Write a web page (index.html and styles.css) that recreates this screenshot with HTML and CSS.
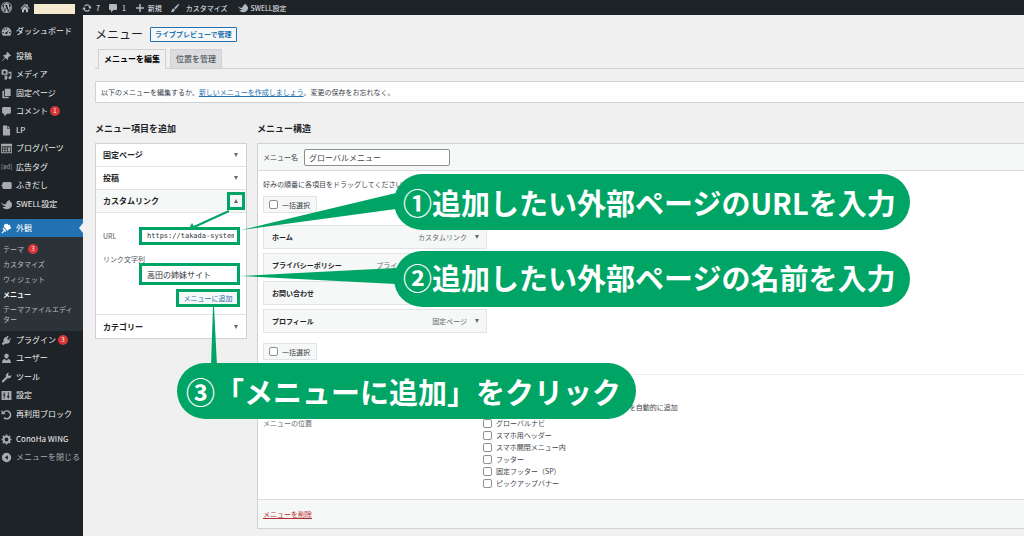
FILE: index.html
```
<!DOCTYPE html>
<html lang="ja">
<head>
<meta charset="utf-8">
<title>メニュー</title>
<link rel="stylesheet" href="styles.css">
</head>
<body>
<svg class="defs" aria-hidden="true">
  <symbol id="i-wp" viewBox="0 0 20 20"><path fill-rule="evenodd" d="M10 0a10 10 0 1 0 0 20 10 10 0 0 0 0-20zm0 1.200a8.800 8.800 0 1 1 0 17.600 8.800 8.800 0 0 1 0-17.600z"/><path d="M2.900 6.800l4 11A8.100 8.100 0 0 1 2.900 6.800zM3.900 5A8.100 8.100 0 0 1 15.300 3.900c-1.500.5-1.500 2.200-.5 3.600 1 1.800.8 3.200.3 4.700l-.9 3L11 6.300h1.200v-.8H6.800v.8h1.100l1.300 3.500-1.900 5.500L4.500 6.300h1.200V5zM10.200 11l2.500 6.800a8 8 0 0 1-4.800.1zM17 6.100a8.100 8.100 0 0 1-3 11l2.500-7.200c.5-1.400.6-2.700.5-3.800z"/></symbol>
  <symbol id="i-home" viewBox="0 0 20 20"><path d="M10 1.500l2.800 2.800V2.500h2.700V7L19 10.500l-1.300 1.300L10 4.200l-7.700 7.600L1 10.500zM10 6l6 6v6.500h-4v-5H8v5H4V12z"/></symbol>
  <symbol id="i-update" viewBox="0 0 20 20"><path d="M10 2.500c3.300 0 6.100 2.100 7.100 5h2.400l-3.600 5-3.600-5h2.200A4.900 4.900 0 0 0 6.100 7L4 5.500a7.500 7.500 0 0 1 6-3zM4.100 7.500l3.600 5H5.500a4.900 4.900 0 0 0 8.400.5l2.100 1.500a7.500 7.500 0 0 1-13.100-2H.5z"/></symbol>
  <symbol id="i-comment" viewBox="0 0 20 20"><path d="M4 2h12a2 2 0 0 1 2 2v8a2 2 0 0 1-2 2h-5l-5 5v-5H4a2 2 0 0 1-2-2V4a2 2 0 0 1 2-2z"/></symbol>
  <symbol id="i-plus" viewBox="0 0 20 20"><path d="M8.500 2h3v6.500H18v3h-6.500V18h-3v-6.500H2v-3h6.500z"/></symbol>
  <symbol id="i-brush" viewBox="0 0 20 20"><path d="M18.500 1.500c1 1-6 10-7.500 11L8.500 10C10 8 17.500.5 18.500 1.500zM7.500 11l2.300 2.400c.2 3.600-4.800 5.600-8.300 4.600 2-.8 1.700-2.500 2.500-4.500s2-2.600 3.500-2.500z"/></symbol>
  <symbol id="i-swell" viewBox="0 0 20 20"><path d="M0 6c3 3.500 6.500 4.500 9 2.500 1-3.500 3.500-6 7.500-6.500l-.5 2.500c2.500.5 4 2.500 4 5.500 0 5-4 8.500-9.500 8.500-4 0-7-2-8-4.500 2.500.8 5 .4 6.500-1C4.500 12.500 1 10 0 6z"/></symbol>
  <symbol id="i-dash" viewBox="0 0 20 20"><path fill-rule="evenodd" d="M3.500 17.500A9 9 0 1 1 16.500 17.500zM9 4h2v2.500H9zM4.500 6l1.300-1.300 1.700 1.800L6.200 7.800zM2.600 11h2.600v2H2.600zM14.800 11h2.600v2h-2.600zM15.500 6.500L11.600 12a2 2 0 1 1-1.200-1z"/></symbol>
  <symbol id="i-pin" viewBox="0 0 20 20"><path d="M11.500 1.500l7 7-1.200 1.200-1.500-.4-3 3c.4 1.800 0 3.200-1 4.200l-3.600-3.600L2 18.500l-.5-.5 5.600-6.200-3.600-3.600c1-1 2.400-1.400 4.200-1l3-3-.4-1.500z"/></symbol>
  <symbol id="i-media" viewBox="0 0 20 20"><path fill-rule="evenodd" d="M1 1.500h3l1-1h3l1 1h3v9H1zm5.500 2a2.500 2.500 0 1 0 0 5 2.500 2.500 0 0 0 0-5z"/><path d="M13.500 5H19v11a2.700 2.700 0 1 1-2-2.600V8h-3.500zM6 12h5.500v5a2.600 2.600 0 1 1-2-2.500V14H6z"/></symbol>
  <symbol id="i-pages" viewBox="0 0 20 20"><path d="M7 1.500h10.500v13H7zM2.500 5h3v11H14v2.500H2.500z"/></symbol>
  <symbol id="i-page" viewBox="0 0 20 20"><path d="M3.500 1H11v6h5.500v12h-13zM12 1l4.500 5H12z"/></symbol>
  <symbol id="i-parts" viewBox="0 0 20 20"><path fill-rule="evenodd" d="M0 1.500h20v17H0zM1.500 6v11h17V6zM3 7.500h3.500v3H3zM8 7.500h3.500v3H8zM13 7.500h4v8h-4zM3 12h3.500v3.500H3zM8 12h3.500v3.500H8z"/></symbol>
  <symbol id="i-balloon" viewBox="0 0 20 20"><rect x="2.500" y="3.500" width="17" height="13" rx="3"/><path d="M0 10l4-2.500v5z"/></symbol>
  <symbol id="i-look" viewBox="0 0 20 20"><path d="M7 1l2 1.500L11.500 1l2 2.500 3.500-.5-1 3 3 2.500-7.500 5.500L5 6.500zM4.500 8l5.500 6.500-2 1.500-1.500-1-4 4-1.500-1.500 4-4.500L3 10z"/></symbol>
  <symbol id="i-plugin" viewBox="0 0 20 20"><path d="M12 1.500L14 3l-3 4 2.500 2 3.500-3.500L18.500 7 15 10.500l1.500 1.500c-2 3.500-5.500 5-8.500 3.500L4 18.500 1.500 16 5 12c-1.500-3 0-6.500 3-8.500l1 1z"/></symbol>
  <symbol id="i-user" viewBox="0 0 20 20"><path d="M10 1a4.300 4.300 0 0 1 4 4.500C14 8 12.300 10 10 10S6 8 6 5.500A4.300 4.300 0 0 1 10 1zM2 18c0-4.500 2-7 5-7l3 2.500 3-2.500c3 0 5 2.500 5 7z"/></symbol>
  <symbol id="i-tool" viewBox="0 0 20 20"><path d="M16.700 6.800l2-1.500c.8 4.200-2.700 7.200-6.700 6L4.500 18.500c-1.800 1.500-4-.8-2.700-2.500L9 8.500C8 4.500 11 1 15 1.500l-2.200 2.300.7 2.800z"/></symbol>
  <symbol id="i-set" viewBox="0 0 20 20"><path fill-rule="evenodd" d="M1 2h18v16H1zM5 4v4H3.500v2H5v6h1.500v-6H8V8H6.500V4zM12.500 4v7H11v2h1.500v3H14v-3h1.500v-2H14V4z"/></symbol>
  <symbol id="i-reuse" viewBox="0 0 20 20"><path d="M1 2v7.500h7.500L6 7a5.500 5.500 0 1 1 .5 7.500L4.300 16.700A8.500 8.500 0 1 0 4 5z"/></symbol>
  <symbol id="i-gear" viewBox="0 0 20 20"><path fill-rule="evenodd" d="M8.500 1h3l.5 2.500 1.500.6 2-1.500 2.100 2.100-1.500 2 .6 1.500 2.300.3v3l-2.300.5-.6 1.500 1.500 2-2.100 2.100-2-1.500-1.500.6-.5 2.300h-3L8 16.700l-1.500-.6-2 1.500-2.100-2.100 1.500-2L3.300 12 1 11.500v-3L3.300 8l.6-1.500-1.500-2 2.100-2.100 2 1.500L8 3.500zM10 6.500a3.500 3.500 0 1 0 0 7 3.500 3.500 0 0 0 0-7z"/></symbol>
  <symbol id="i-collapse" viewBox="0 0 20 20"><path fill-rule="evenodd" d="M10 1.500a8.500 8.500 0 1 0 0 17 8.500 8.500 0 0 0 0-17zM12.500 6v8L7 10z"/></symbol>
</svg>

<header class="adminbar">
  <a href="#" class="bar-logo" aria-label="WordPress"><svg class="bar-icon"><use href="#i-wp"/></svg></a>
  <a href="#" class="bar-site" aria-label="サイト"><svg class="bar-icon"><use href="#i-home"/></svg><span class="site-mask"></span></a>
  <a href="#" class="bar-count"><svg class="bar-icon"><use href="#i-update"/></svg>7</a>
  <a href="#" class="bar-count"><svg class="bar-icon"><use href="#i-comment"/></svg>1</a>
  <a href="#" class="bar-new"><svg class="bar-icon"><use href="#i-plus"/></svg>新規</a>
  <a href="#" class="bar-custom"><svg class="bar-icon"><use href="#i-brush"/></svg>カスタマイズ</a>
  <a href="#" class="bar-swell"><svg class="bar-icon"><use href="#i-swell"/></svg>SWELL設定</a>
</header>

<div class="layout">
  <nav class="sidebar">
    <ul class="nav-group">
      <li><a href="#"><svg class="icon"><use href="#i-dash"/></svg>ダッシュボード</a></li>
    </ul>
    <ul class="nav-group">
      <li><a href="#"><svg class="icon"><use href="#i-pin"/></svg>投稿</a></li>
      <li><a href="#"><svg class="icon"><use href="#i-media"/></svg>メディア</a></li>
      <li><a href="#"><svg class="icon"><use href="#i-pages"/></svg>固定ページ</a></li>
      <li><a href="#"><svg class="icon"><use href="#i-comment"/></svg>コメント<span class="badge">1</span></a></li>
      <li><a href="#"><svg class="icon"><use href="#i-page"/></svg>LP</a></li>
      <li><a href="#"><svg class="icon"><use href="#i-parts"/></svg>ブログパーツ</a></li>
      <li><a href="#"><span class="icon icon-text">[ad]</span>広告タグ</a></li>
      <li><a href="#"><svg class="icon"><use href="#i-balloon"/></svg>ふきだし</a></li>
      <li><a href="#"><svg class="icon"><use href="#i-swell"/></svg>SWELL設定</a></li>
    </ul>
    <ul class="nav-group group-current">
      <li class="current"><a href="#"><svg class="icon"><use href="#i-look"/></svg>外観</a></li>
    </ul>
    <ul class="subnav">
      <li><a href="#">テーマ<span class="badge">3</span></a></li>
      <li><a href="#">カスタマイズ</a></li>
      <li><a href="#">ウィジェット</a></li>
      <li><a href="#" class="active">メニュー</a></li>
      <li class="two-line"><a href="#">テーマファイルエディター</a></li>
    </ul>
    <ul class="nav-group after-sub">
      <li><a href="#"><svg class="icon"><use href="#i-plugin"/></svg>プラグイン<span class="badge">3</span></a></li>
      <li><a href="#"><svg class="icon"><use href="#i-user"/></svg>ユーザー</a></li>
      <li><a href="#"><svg class="icon"><use href="#i-tool"/></svg>ツール</a></li>
      <li><a href="#"><svg class="icon"><use href="#i-set"/></svg>設定</a></li>
      <li><a href="#"><svg class="icon"><use href="#i-reuse"/></svg>再利用ブロック</a></li>
    </ul>
    <ul class="nav-group">
      <li><a href="#"><svg class="icon"><use href="#i-gear"/></svg>ConoHa WING</a></li>
      <li><a href="#" class="collapse"><svg class="icon"><use href="#i-collapse"/></svg>メニューを閉じる</a></li>
    </ul>
  </nav>

  <main class="content">
    <div class="title-row">
      <h1>メニュー</h1>
      <button type="button" class="preview">ライブプレビューで管理</button>
    </div>
    <div class="tabs">
      <a href="#" class="tab tab-active">メニューを編集</a>
      <a href="#" class="tab">位置を管理</a>
    </div>
    <p class="notice">以下のメニューを編集するか、<a href="#">新しいメニューを作成しましょう</a>。変更の保存をお忘れなく。</p>

    <div class="columns">
      <section class="add-items">
        <h2>メニュー項目を追加</h2>
        <div class="accordion">
          <h3>固定ページ<button type="button" class="toggle" aria-label="固定ページを開く"></button></h3>
          <h3>投稿<button type="button" class="toggle" aria-label="投稿を開く"></button></h3>
          <h3 class="open">カスタムリンク<button type="button" class="toggle toggle-up marked" aria-label="カスタムリンクを閉じる"></button></h3>
          <form class="link-form">
            <div class="field">
              <label for="url">URL</label>
              <input id="url" class="url-input marked" type="text" value="https://takada-system.com">
            </div>
            <div class="field field-name">
              <label for="name">リンク文字列</label>
              <input id="name" class="name-input marked" type="text" value="高田の姉妹サイト">
            </div>
            <button type="button" class="add-button marked">メニューに追加</button>
          </form>
          <h3>カテゴリー<button type="button" class="toggle" aria-label="カテゴリーを開く"></button></h3>
        </div>
      </section>

      <section class="structure">
        <h2>メニュー構造</h2>
        <div class="panel">
          <div class="panel-head">
            <label for="menu-name">メニュー名</label>
            <input id="menu-name" type="text" value="グローバルメニュー">
          </div>
          <div class="panel-body">
            <p>好みの順番に各項目をドラッグしてください</p>
            <label class="bulk"><input type="checkbox">一括選択</label>
            <ul class="items">
              <li><b>ホーム</b><span>カスタムリンク</span><button type="button" class="toggle" aria-label="ホームを編集"></button></li>
              <li><b>プライバシーポリシー</b><span>プライバシーポリシーページ</span><button type="button" class="toggle" aria-label="プライバシーポリシーを編集"></button></li>
              <li><b>お問い合わせ</b><button type="button" class="toggle" aria-label="お問い合わせを編集"></button></li>
              <li><b>プロフィール</b><span>固定ページ</span><button type="button" class="toggle" aria-label="プロフィールを編集"></button></li>
            </ul>
            <label class="bulk"><input type="checkbox">一括選択</label>
          </div>
          <div class="settings">
            <div class="setting">
              <div class="choices"><label><input type="checkbox">このメニューに新しいトップレベルページを自動的に追加</label></div>
            </div>
            <div class="setting">
              <span>メニューの位置</span>
              <div class="choices">
                <label><input type="checkbox">グローバルナビ</label>
                <label><input type="checkbox">スマホ用ヘッダー</label>
                <label><input type="checkbox">スマホ開閉メニュー内</label>
                <label><input type="checkbox">フッター</label>
                <label><input type="checkbox">固定フッター（SP）</label>
                <label><input type="checkbox">ピックアップバナー</label>
              </div>
            </div>
          </div>
          <div class="panel-foot"><a href="#">メニューを削除</a></div>
        </div>
      </section>
    </div>
  </main>
</div>

<svg class="pointers" width="640" height="370" viewBox="0 0 640 370" aria-hidden="true">
  <path d="M241 230L396 193V209z"/>
  <path d="M240 276L396 268V284z"/>
  <path d="M213 306h1L217 366H211z"/>
  <path d="M229 211L194 227" class="arrow-line"/>
  <path d="M188 230l4-7 3.500 6z"/>
</svg>
<div class="callout callout-1">①追加したい外部ページのURLを入力</div>
<div class="callout callout-2">②追加したい外部ページの名前を入力</div>
<div class="callout callout-3">③「メニューに追加」をクリック</div>
</body>
</html>
```
FILE: styles.css
```
* { box-sizing: border-box; }

body {
  margin: 0;
  min-height: 100vh;
  display: flex;
  flex-direction: column;
  background: #f0f0f0;
  color: #3c434a;
  font: 7px/10px "Noto Sans CJK JP", sans-serif;
  overflow: hidden;
}

h1, h2, h3, p, ul { margin: 0; padding: 0; }
ul { list-style: none; }
button, input { font: inherit; color: inherit; margin: 0; }
.defs { display: none; }

/* Top bar */
.adminbar {
  height: 15px;
  display: flex;
  align-items: center;
  background: #1d2327;
  color: #f0f0f1;
}
.adminbar a {
  display: flex;
  align-items: center;
  gap: 3px;
  color: inherit;
  text-decoration: none;
}
.bar-icon { width: 10px; height: 10px; fill: #b3b8bd; flex: none; }
.bar-logo { padding-left: 1px; width: 20px; }
.bar-logo .bar-icon { width: 11px; height: 11px; }
.site-mask { width: 41px; height: 10px; margin-top: 2px; background: #f5e9cf; }
.adminbar .bar-site { gap: 4px; margin-right: 7px; }
.adminbar .bar-count { gap: 4px; margin-right: 8px; }
.adminbar .bar-new { margin-right: 8px; margin-left: 1px; }
.adminbar .bar-custom { gap: 6px; margin-right: 10px; }

/* Side navigation */
.layout { flex: 1; display: flex; }
.sidebar {
  flex: none;
  width: 83px;
  background: #1d2327;
  color: #f0f0f1;
  font-size: 8px;
}
.nav-group { padding-top: 7px; }
.nav-group li { height: 18px; }
.nav-group li:nth-child(even) { height: 19px; }
.nav-group a {
  height: 18px;
  display: flex;
  align-items: center;
  gap: 4px;
  padding-left: 1px;
  color: inherit;
  text-decoration: none;
  white-space: nowrap;
}
.nav-group.group-current { padding-top: 6px; }
.icon { flex: none; width: 11px; height: 11px; fill: #a7aaad; }
.icon-text { color: #a7aaad; font-size: 6px; line-height: 10px; }
.badge {
  width: 10px;
  height: 10px;
  border-radius: 5px;
  background: #d63638;
  color: #fff;
  font-size: 6px;
  line-height: 10px;
  text-align: center;
}
.nav-group .badge { margin-left: -2px; }
.current { position: relative; background: #2271b1; color: #fff; }
.current .icon { fill: #fff; }
.current::after {
  content: "";
  position: absolute;
  right: 0;
  top: 4px;
  border: 5px solid transparent;
  border-left: 0;
  border-right: 4px solid #f0f0f0;
}
.subnav {
  padding: 4px 3px 7px;
  background: #2c3338;
  color: #b8bbbe;
  font-size: 7px;
}
.subnav a {
  display: flex;
  align-items: center;
  gap: 4px;
  min-height: 15px;
  color: inherit;
  text-decoration: none;
}
.subnav .active { color: #fff; font-weight: 700; }
.two-line { padding: 3px 4px 0 0; }
.nav-group.after-sub { padding-top: 0; }
.nav-group .collapse { color: #a7aaad; }

/* Page heading */
.content { flex: 1; min-width: 0; padding: 11px 0 8px 12px; }
.title-row { display: flex; align-items: center; gap: 7px; }
h1 { font-size: 12px; line-height: 16px; font-weight: 400; color: #1d2327; }
.preview {
  height: 15px;
  padding: 0 4px;
  border: 1px solid #2271b1;
  border-radius: 1px;
  background: #f6f7f7;
  color: #2271b1;
  font-weight: 700;
  line-height: 12px;
}
.tabs {
  display: flex;
  gap: 4px;
  margin-top: 7px;
  padding-left: 3px;
  border-bottom: 1px solid #d0d1d3;
}
.tab {
  height: 19px;
  padding: 0 5px;
  border: 1px solid #d0d1d3;
  border-bottom: 0;
  background: #dcdcde;
  color: #50575e;
  font-size: 8px;
  font-weight: 500;
  line-height: 17px;
  text-decoration: none;
}
.tab-active {
  height: 20px;
  margin-bottom: -1px;
  background: #f0f0f0;
  color: #000;
  font-weight: 700;
}
.notice {
  margin-top: 12px;
  padding: 5px;
  border: 1px solid #d0d1d3;
  border-right: 0;
  background: #fff;
}
a { color: #2271b1; }

/* Two columns */
.columns { display: flex; gap: 10px; margin-top: 20px; }
h2 { color: #1d2327; font-size: 9px; line-height: 12px; font-weight: 700; }
.add-items { flex: none; width: 152px; }
.structure { flex: 1; min-width: 0; }
.accordion, .panel {
  margin-top: 8px;
  border: 1px solid #d0d1d3;
  background: #fff;
}
.accordion h3 {
  display: flex;
  align-items: center;
  justify-content: space-between;
  height: 23px;
  padding: 0 2px 0 7px;
  border-bottom: 1px solid #e2e3e5;
  color: #1d2327;
  font-size: 8px;
  font-weight: 700;
}
.accordion h3:last-child { border-bottom: 0; }
.accordion .open { background: #f6f7f7; }
.toggle {
  display: grid;
  place-items: center;
  width: 16px;
  height: 16px;
  padding: 0;
  border: 0;
  background: none;
}
.toggle::before {
  content: "";
  border: 2px solid transparent;
  border-top: 4px solid #646970;
  border-bottom: 0;
}
.toggle-up::before {
  border-top: 0;
  border-bottom: 4px solid #646970;
}
.marked { outline: 3px solid #00a566; outline-offset: -2px; }

.link-form {
  display: flex;
  flex-direction: column;
  height: 102px;
  padding: 15px 7px 8px;
  border-bottom: 1px solid #e2e3e5;
  color: #50575e;
}
.field { display: flex; justify-content: space-between; align-items: center; }
.field input {
  width: 99px;
  height: 16px;
  padding: 0 4px 0 6px;
  border: 1px solid #8c8f94;
  background: #fff;
  color: #2c3338;
}
.field .url-input { font-family: "DejaVu Sans Mono", monospace; }
.field-name { display: block; margin-top: 10px; }
.field-name label { display: block; }
.field .name-input {
  display: block;
  height: 20px;
  margin-left: auto;
  border: 2px solid #2271b1;
  padding: 0 5px;
  font-size: 8px;
}
.add-button {
  align-self: flex-end;
  width: 62px;
  height: 17px;
  margin-top: 6px;
  padding: 0;
  border: 1px solid #2271b1;
  background: #f6f7f7;
  color: #2271b1;
}

/* Menu structure */
.panel { border-right: 0; }
.panel-head {
  display: flex;
  align-items: center;
  gap: 6px;
  height: 27px;
  padding: 0 5px;
  border-bottom: 1px solid #dcdcde;
  background: #f6f7f7;
}
.panel-head input {
  width: 146px;
  height: 17px;
  padding: 0 4px;
  border: 1px solid #8c8f94;
  border-radius: 2px;
  background: #fff;
  font-size: 8px;
}
.panel-body { padding: 8px 5px 14px; }
.bulk {
  display: flex;
  align-items: center;
  width: 54px;
  height: 17px;
  margin-top: 7px;
  padding-left: 5px;
  border: 1px solid #e2e3e5;
  background: #f6f7f7;
}
input[type="checkbox"] {
  appearance: none;
  flex: none;
  width: 9px;
  height: 9px;
  margin-right: 4px;
  border: 1px solid #8c8f94;
  border-radius: 2px;
  background: #fff;
}
.items { display: grid; gap: 4px; width: 224px; margin: 12px 0 10px; }
.items li {
  display: flex;
  align-items: center;
  height: 24px;
  padding: 0 1px 0 8px;
  border: 1px solid #e2e3e5;
  background: #f6f7f7;
}
.items b { flex: 1; color: #1d2327; }
.items span { margin-right: 2px; color: #646970; }
.settings { padding: 26px 5px 10px; border-top: 1px solid #f0f0f1; }
.setting { display: flex; line-height: 12px; }
.setting + .setting { margin-top: 4px; }
.setting > span { color: #646970; }
.choices { width: calc(100% - 220px); margin-left: auto; }
.setting label { display: flex; align-items: center; white-space: nowrap; }
.panel-foot {
  padding: 9px 5px;
  border-top: 1px solid #dcdcde;
  background: #f6f7f7;
}
.panel-foot a { color: #b32d2e; }

/* Annotations lying over the screen */
.pointers { position: absolute; left: 0; top: 0; fill: #00a566; pointer-events: none; }
.arrow-line { stroke: #00a566; stroke-width: 2; }
.callout {
  position: absolute;
  display: flex;
  align-items: center;
  height: 56px;
  padding-left: 9px;
  border-radius: 28px;
  background: #00a566;
  color: #fff;
  font-size: 29px;
  line-height: 40px;
  font-weight: 700;
  white-space: nowrap;
}
.callout-1 { left: 394px; top: 174px; width: 516px; }
.callout-2 { left: 394px; top: 251px; width: 516px; padding-bottom: 5px; }
.callout-3 { left: 177px; top: 363px; width: 459px; }
```
